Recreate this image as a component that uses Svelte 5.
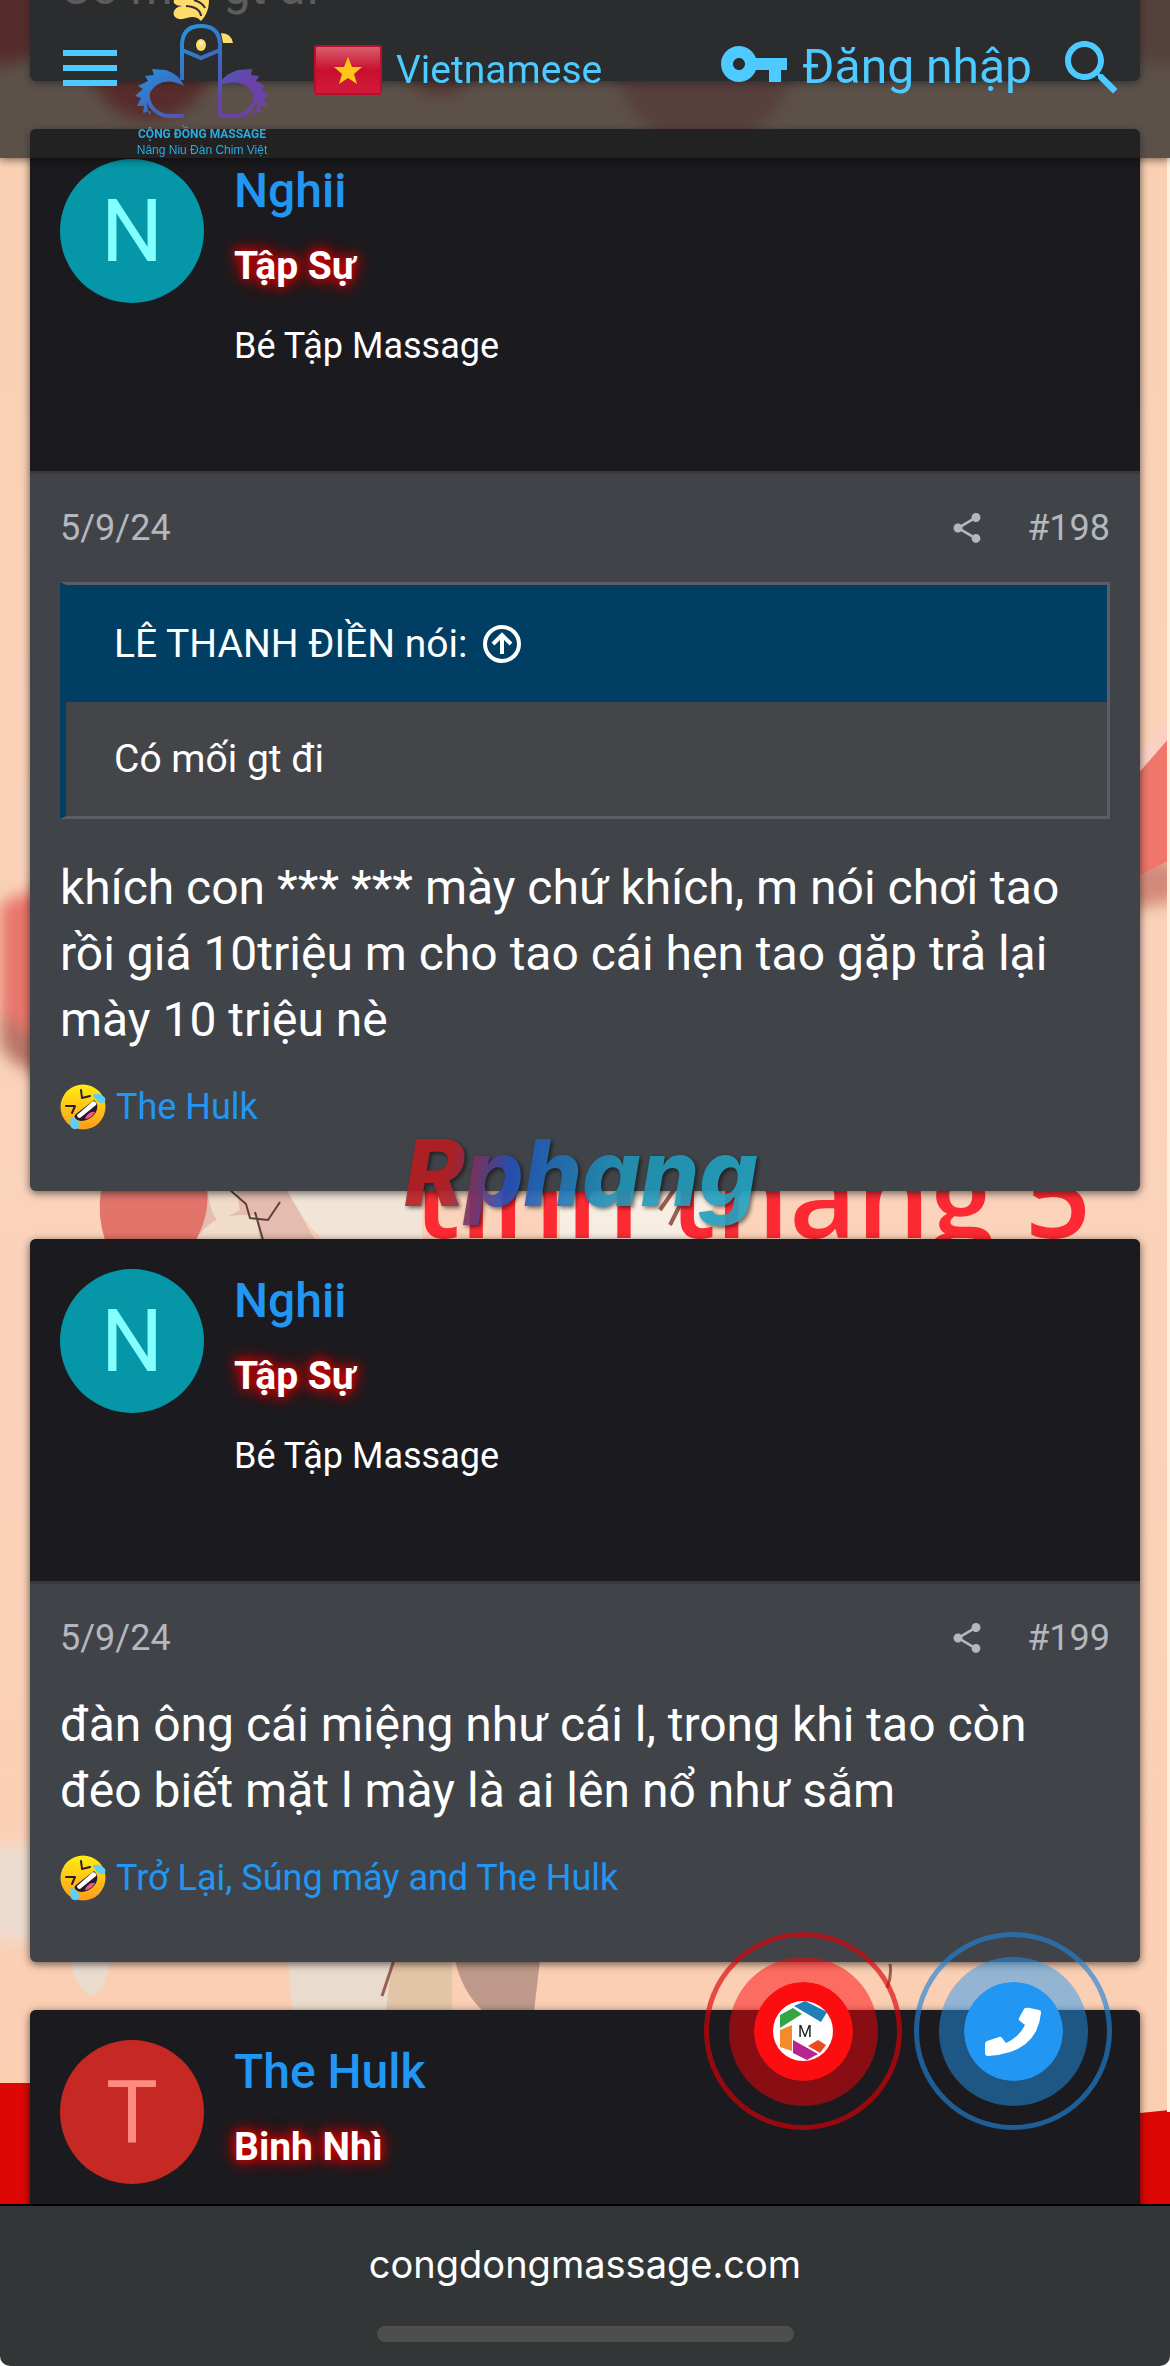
<script>
    const posts = [
        {
            number: 198,
            user: 'Nghii',
            rank: 'Tập Sự',
            title: 'Bé Tập Massage',
            color: 'teal',
            date: '5/9/24',
            quote: {author: 'LÊ THANH ĐIỀN', text: 'Có mối gt đi'},
            text: 'khích con *** *** mày chứ khích, m nói chơi tao rồi giá 10triệu m cho tao cái hẹn tao gặp trả lại mày 10 triệu nè',
            reactions: 'The Hulk'
        },
        {
            number: 199,
            user: 'Nghii',
            rank: 'Tập Sự',
            title: 'Bé Tập Massage',
            color: 'teal',
            date: '5/9/24',
            text: 'đàn ông cái miệng như cái l, trong khi tao còn đéo biết mặt l mày là ai lên nổ như sắm',
            reactions: 'Trở Lại, Súng máy and The Hulk'
        },
        {
            number: 200,
            user: 'The Hulk',
            rank: 'Binh Nhì',
            color: 'red'
        }
    ];
</script>

{#snippet laugh()}
    <svg class="emoji" viewBox="0 0 46 46" aria-hidden="true">
        <defs>
            <linearGradient id="face" x1="0" y1="0" x2="0" y2="1">
                <stop offset="0" stop-color="#ffee12" />
                <stop offset="1" stop-color="#ff9c1c" />
            </linearGradient>
        </defs>
        <circle cx="23" cy="23" r="22.500" fill="url(#face)" />
        <path d="M21 6l1 8 8-2M6 22l9 0-3 7" fill="none" stroke="#2b1c28" stroke-width="2" stroke-linecap="round" stroke-linejoin="round" />
        <path d="M34 16c5 4 4 11-1 16-5 5-14 7-18 2-1-2 0-3 1-4z" fill="#251a2c" />
        <path d="M33 17c3 1 4 2 3 4L20 34c-2 0-3-1-3-3z" fill="#fff" />
        <path d="M25 35c1-4 6-8 10-7-2 4-6 7-10 7z" fill="#f2577e" />
        <path d="M33 11c4-3 10 0 12 3 1 2 0 5-2 5-4 1-7-3-10-8zM11 32c5 3 9 6 8 10-1 4-6 4-8 1-1-3-1-7 0-11z" fill="#5fd0f5" />
    </svg>
{/snippet}

<main>
    <svg class="backdrop" viewBox="0 0 1170 2366" preserveAspectRatio="none" aria-hidden="true">
        <defs>
            <linearGradient id="peach" x1="0" y1="0" x2="0" y2="1">
                <stop offset="0" stop-color="#f9d0b2" />
                <stop offset="0.500" stop-color="#fad3bb" />
                <stop offset="1" stop-color="#fccdb0" />
            </linearGradient>
            <filter id="soft"><feGaussianBlur stdDeviation="8" /></filter>
        </defs>
        <rect width="1170" height="2366" fill="url(#peach)" />
        <g filter="url(#soft)">
            <ellipse cx="0" cy="10" rx="60" ry="55" fill="#e3423c" />
            <circle cx="150" cy="58" r="62" fill="#e8433e" />
            <circle cx="440" cy="55" r="40" fill="#dd6a58" />
            <circle cx="704" cy="55" r="90" fill="#e58a80" />
            <ellipse cx="1160" cy="10" rx="60" ry="55" fill="#dd9080" />
            <path d="M0 905q20-14 60-18v190q-40-6-60-30z" fill="#e8756b" />
            <path d="M0 1010q30 30 60 34v36q-50-10-60-36z" fill="#b87468" />
            <rect x="-10" y="1845" width="60" height="95" fill="#ecdcd0" />
            <path d="M1130 860h50v40l-50 10z" fill="#d3897a" />
        </g>
        <path d="M1130 780l40-50v130l-40 20z" fill="#ef7668" />
        <path d="M1130 765l40-46v18l-40 46z" fill="#fbd0c4" />
        <path d="M101 1190h106q10 24-4 50h-98q-8-24-4-50z" fill="#e3746a" />
        <path d="M207 1190h80l28 50H196q14-26 11-50z" fill="#e4bcb0" />
        <path d="M208 1190h28l4 20-22 12q-10-14-10-32zM196 1240q16-30 60-24l4 24z" fill="#f1dcc8" />
        <path d="M287 1190h135v50H322q-22-24-35-50z" fill="#f1e5d8" />
        <path d="M230 1190l16 14 4 14 18 2 12-18M255 1212l8 28" fill="none" stroke="#5b4038" stroke-width="2" />
        <path d="M560 1190h160l-20 50H560z" fill="#f7ede2" />
        <path d="M660 1210l14-20M670 1225l10-20" stroke="#9a5e50" stroke-width="4" />
        <text class="banner" x="414" y="1238">tình tháng 5</text>
        <path d="M288 1960h160v52H292z" fill="#eadccd" />
        <path d="M70 1960h40q-4 34-20 36-16-12-20-36z" fill="#e9dccf" />
        <path d="M392 1960h60v52h-66z" fill="#e2c4a6" />
        <path d="M455 1960h85l-6 52h-50q-22-20-29-52z" fill="#bf9a8a" />
        <path d="M394 1960l-12 36M890 1964q2 12-3 24" fill="none" stroke="#9a5f54" stroke-width="3" />
        <path d="M0 2083h32v30h1108l30-3v256H0z" fill="#dd0805" />
        <rect x="1167" y="158" width="3" height="1954" fill="#fff0dc" />
    </svg>

    <header>
        <button aria-label="Menu">
            <svg class="icon" viewBox="0 0 24 24"><path d="M3 18h18v-2H3v2zm0-5h18v-2H3v2zm0-7v2h18V6H3z" /></svg>
        </button>
        <a class="logo" href="#home" aria-label="Cộng Đồng Massage">
            <svg viewBox="0 0 136 126" aria-hidden="true">
                <defs>
                    <linearGradient id="bird" gradientUnits="userSpaceOnUse" x1="34" y1="30" x2="90" y2="100">
                        <stop offset="0" stop-color="#1f9de3" />
                        <stop offset="0.600" stop-color="#3f68bf" />
                        <stop offset="1" stop-color="#6a42a8" />
                    </linearGradient>
                </defs>
                <g fill="none" stroke="url(#bird)" stroke-width="4">
                    <path d="M48 80V44q1-18 19-18t19 18v72h14c16 0 24-14 20-24" />
                    <path d="M48 50l19 8 19-8M50 116H36C22 116 12 104 14 92" />
                </g>
                <path d="M50 86q-4-11-18-16l-14-1 2 6-9 1 3 5-10 5 5 3-8 7 6 2-4 8 7 0-1 7 8-2-1 5q-5-12-1-22 12-20 35-8zM86 82q7-9 18-12l14-1-1 6 8 1-3 5 9 5-4 3 8 7-6 2 4 8-7 0 1 7-8-2 1 5q6-12 0-22-11-17-34-9z" fill="url(#bird)" />
                <path d="M40 0c-2 5 5 6 11 6-9-1-14 6-10 11 8 7 17-6 26 4 5-5 8-12 8-21zM87 33q10 0 12 10H89z" fill="#fddc6b" />
                <path d="M52 6q14 1 15 10M60 0q9 3 11 8" fill="none" stroke="#2d2d2d" stroke-width="2" />
                <ellipse cx="67" cy="45" rx="5" ry="6" fill="#fddc6b" />
                <circle cx="67" cy="43" r="2" fill="#fff3cf" />
            </svg>
            <strong>CỘNG ĐỒNG MASSAGE</strong>
            <small>Nâng Niu Đàn Chim Việt</small>
        </a>
        <a class="language" href="#language">
            <svg class="flag" viewBox="0 0 68 50" aria-hidden="true">
                <defs>
                    <linearGradient id="flag" x1="0" y1="0" x2="0" y2="1">
                        <stop offset="0" stop-color="#d9606f" />
                        <stop offset="0.500" stop-color="#c8102e" />
                        <stop offset="1" stop-color="#d41a3a" />
                    </linearGradient>
                </defs>
                <rect x="1" y="1" width="66" height="48" rx="2" fill="url(#flag)" stroke="#b8102a" stroke-width="2" />
                <path d="M34 12l4 10h10l-8 7 3 10-9-6-9 6 3-10-8-7h10z" fill="#ffc61a" />
            </svg>
            Vietnamese
        </a>
        <a class="login" href="#login">
            <svg class="icon" viewBox="0 0 24 24"><path d="M12.65 10C11.83 7.67 9.61 6 7 6c-3.310 0-6 2.690-6 6s2.690 6 6 6c2.610 0 4.830-1.670 5.650-4H17v4h4v-4h2v-4H12.650zM7 14c-1.100 0-2-.9-2-2s.9-2 2-2 2 .9 2 2-.9 2-2 2z" /></svg>
            Đăng nhập
        </a>
        <button aria-label="Tìm kiếm">
            <svg class="icon" viewBox="0 0 24 24"><path d="M15.500 14h-.79l-.28-.27C15.410 12.590 16 11.110 16 9.500 16 5.910 13.090 3 9.500 3S3 5.910 3 9.500 5.910 16 9.500 16c1.610 0 3.090-.59 4.230-1.570l.27.28v.79l5 4.990L20.490 19l-4.990-5zm-6 0C7.010 14 5 11.990 5 9.500S7.010 5 9.500 5 14 7.010 14 9.500 11.990 14 9.500 14z" /></svg>
        </button>
    </header>

    <div class="thread">
        <article>
            <div class="content"><p>Có mối gt đi</p></div>
        </article>
        {#each posts as post}
            <article>
                <div class="user">
                    <a class="avatar {post.color}" href="#{post.user}" aria-label={post.user}>{post.user[0]}</a>
                    <div class="info">
                        <a class="name" href="#{post.user}">{post.user}</a>
                        <strong>{post.rank}</strong>
                        {#if post.title}
                            <span>{post.title}</span>
                        {/if}
                    </div>
                </div>
                {#if post.text}
                    <div class="content">
                        <div class="meta">
                            <a href="#post">{post.date}</a>
                            <a class="share" href="#share" aria-label="Chia sẻ">
                                <svg viewBox="0 0 24 24"><path d="M18 16.080c-.76 0-1.440.3-1.960.77L8.910 12.700c.05-.23.09-.46.09-.7s-.04-.47-.09-.7l7.050-4.110c.54.5 1.250.81 2.040.81 1.660 0 3-1.340 3-3s-1.340-3-3-3-3 1.340-3 3c0 .24.04.47.09.7L8.040 9.810C7.500 9.310 6.790 9 6 9c-1.660 0-3 1.340-3 3s1.340 3 3 3c.79 0 1.500-.31 2.040-.81l7.120 4.160c-.05.21-.08.43-.08.65 0 1.610 1.310 2.920 2.920 2.920s2.920-1.310 2.920-2.920-1.310-2.920-2.920-2.920z" /></svg>
                            </a>
                            <a href="#post-{post.number}">#{post.number}</a>
                        </div>
                        {#if post.quote}
                            <blockquote>
                                <a href="#quote">
                                    {post.quote.author} nói:
                                    <svg viewBox="0 0 38 38" aria-hidden="true"><circle cx="19" cy="19" r="17" /><path d="M19 29V11M10 19l9-9 9 9" /></svg>
                                </a>
                                <div>{post.quote.text}</div>
                            </blockquote>
                        {/if}
                        <p>{post.text}</p>
                        <a class="reactions" href="#reactions">{@render laugh()}{post.reactions}</a>
                    </div>
                {/if}
            </article>
        {/each}
    </div>

    <div class="watermark">Rphang</div>

    <div class="contact">
        <a class="bubble site" href="#site" aria-label="Trang chủ">
            <span>
                <svg viewBox="0 0 60 60" aria-hidden="true">
                    <circle cx="30" cy="30" r="30" fill="#fff" />
                    <path d="M21 5l11-5 22 11-6 10z" fill="#1f7fb8" />
                    <path d="M7 14l13-7 9 6-22 14z" fill="#35a544" />
                    <path d="M7 29l12-5v26l-12-4z" fill="#f58a2c" />
                    <path d="M20 39l25 14-11 6-14-7z" fill="#b5248f" />
                    <path d="M35 45l10-6 8 5-6 8z" fill="#ea4b1f" />
                    <text x="32" y="36" text-anchor="middle">M</text>
                </svg>
            </span>
        </a>
        <a class="bubble phone" href="#phone" aria-label="Gọi điện">
            <span>
                <svg viewBox="0 0 60 60" aria-hidden="true"><path d="M47 7l9 2q2 0 2 3-4 40-53 43-3 0-3-3V43q0-2 2-3l12-4q2-1 3 1l4 5q13-6 19-18l-5-4q-2-1-1-3l5-9q1-2 6-1z" fill="#fff" /></svg>
            </span>
        </a>
    </div>

    <footer>
        <div class="address">
            <span>congdongmassage.com</span>
            <i></i>
        </div>
    </footer>
</main>

<style>
    :global(body) {
        background: #fff;
    }

    main {
        position: relative;
        height: 100vh;
        overflow: hidden;
        color: #fff;
        font-family: Roboto, sans-serif;
        font-size: 36px;
    }

    a {
        color: inherit;
        text-decoration: none;
    }

    button {
        padding: 0;
        border: none;
        background: none;
        color: inherit;
        cursor: pointer;
    }

    svg {
        display: block;
    }

    .backdrop {
        position: absolute;
        width: 100%;
        height: 100%;
    }

    .banner {
        fill: #fd2a33;
        font-family: "Open Sans", sans-serif;
        font-size: 116px;
        font-weight: 600;
    }

    header {
        position: fixed;
        z-index: 2;
        top: 0;
        left: 0;
        right: 0;
        display: flex;
        align-items: flex-start;
        box-sizing: border-box;
        height: 158px;
        padding: 0 42px 0 54px;
        background: rgba(37, 37, 37, 0.74);
        box-shadow: 0 2px 8px rgba(0, 0, 0, 0.5);
        color: #4dcaff;
    }

    header button {
        padding-top: 32px;
    }

    .icon {
        width: 72px;
        height: 72px;
        fill: currentColor;
    }

    .logo {
        display: flex;
        flex-direction: column;
        align-items: center;
        width: 136px;
        margin-left: 8px;
        color: #29abe2;
        white-space: nowrap;
    }

    .logo svg {
        width: 136px;
        height: 126px;
    }

    .logo strong {
        font-size: 12px;
        line-height: 16px;
    }

    .logo small {
        font-family: "Liberation Sans", sans-serif;
        font-size: 12px;
        line-height: 16px;
    }

    .language {
        display: flex;
        align-items: center;
        gap: 14px;
        height: 140px;
        margin-left: 44px;
        font-size: 39px;
    }

    .flag {
        width: 68px;
        height: 50px;
    }

    .login {
        display: flex;
        align-items: center;
        gap: 12px;
        height: 132px;
        margin: 0 24px 0 auto;
        font-size: 48px;
    }

    .login .icon {
        margin-top: -4px;
    }

    .thread {
        display: flex;
        flex-direction: column;
        gap: 48px;
        margin-top: -75px;
        padding: 0 30px;
    }

    article {
        position: relative;
        border-radius: 6px;
        background: #404448;
        box-shadow: 0 2px 8px rgba(0, 0, 0, 0.6);
    }

    .user {
        display: flex;
        gap: 30px;
        box-sizing: border-box;
        height: 345px;
        padding: 30px;
        border-bottom: 3px solid #393a3c;
        border-radius: 6px 6px 0 0;
        background: #1b1b1f;
    }

    .avatar {
        flex: none;
        width: 144px;
        height: 144px;
        border-radius: 50%;
        font-size: 87px;
        line-height: 144px;
        text-align: center;
    }

    .teal {
        background: #0597a7;
        color: #84ffff;
    }

    .red {
        background: #c62923;
        color: #ff8a80;
    }

    .info {
        display: flex;
        flex-direction: column;
    }

    .name {
        color: #2196f3;
        font-size: 48px;
        font-weight: 500;
        line-height: 64px;
    }

    .info strong {
        margin-top: 16px;
        font-size: 39px;
        line-height: 54px;
        text-shadow: 0 0 8px #c00, 0 0 14px #d00, 0 0 20px #a00;
    }

    .info span {
        margin-top: 28px;
        line-height: 50px;
    }

    .content {
        display: flow-root;
        padding: 30px 30px 60px;
    }

    .meta {
        display: flex;
        align-items: center;
        height: 48px;
        margin-bottom: 30px;
        color: #b4b7be;
    }

    .share {
        margin: 0 42px 0 auto;
    }

    .share svg {
        width: 36px;
        height: 36px;
        fill: currentColor;
    }

    blockquote {
        margin: 0 0 36px;
        border: 3px solid #5a5d63;
        border-left: 6px solid #003e63;
        background: #434549;
        font-size: 39px;
    }

    blockquote a,
    blockquote div {
        display: flex;
        align-items: center;
        gap: 16px;
        height: 114px;
        padding: 0 48px;
    }

    blockquote a {
        height: 117px;
        background: #003e63;
    }

    blockquote svg {
        width: 38px;
        height: 38px;
        fill: none;
        stroke: currentColor;
        stroke-width: 4px;
    }

    p {
        margin: 0;
        font-size: 48px;
        line-height: 66px;
    }

    .reactions {
        display: flex;
        align-items: center;
        gap: 10px;
        height: 48px;
        margin-top: 30px;
        color: #2196f3;
    }

    .emoji {
        width: 46px;
        height: 46px;
    }

    .watermark {
        position: absolute;
        top: 50%;
        left: 50%;
        padding: 0 8px 20px 0;
        background: linear-gradient(100deg, #b71c22 14%, #2350b8 30%, #1f78b5 46%, #1f93b5 58%, #22a6c4);
        background-clip: text;
        color: transparent;
        filter: drop-shadow(2px 2px 2px rgba(0, 0, 0, 0.6));
        font-family: Inter, sans-serif;
        font-size: 92px;
        font-style: italic;
        font-weight: 800;
        line-height: 110px;
        opacity: 0.9;
        transform: translate(-50%, -50%);
    }

    .contact {
        position: fixed;
        right: 58px;
        bottom: 236px;
        display: flex;
        gap: 12px;
    }

    .bubble {
        display: grid;
        place-items: center;
        box-sizing: border-box;
        width: 198px;
        height: 198px;
        border: 5px solid;
        border-radius: 50%;
    }

    .bubble span {
        display: grid;
        place-items: center;
        box-sizing: border-box;
        width: 149px;
        height: 149px;
        border: 25px solid;
        border-radius: 50%;
        background-clip: padding-box;
    }

    .site {
        border-color: rgba(220, 0, 8, 0.65);
    }

    .site span {
        border-color: rgba(255, 0, 8, 0.48);
        background-color: #fb0d10;
    }

    .phone {
        border-color: rgba(33, 130, 215, 0.65);
    }

    .phone span {
        border-color: rgba(33, 150, 243, 0.48);
        background-color: #2196f3;
    }

    .bubble svg {
        width: 60px;
        height: 60px;
    }

    .bubble text {
        fill: #222;
        font-size: 16px;
    }

    footer {
        position: fixed;
        z-index: 3;
        right: 0;
        bottom: 0;
        left: 0;
        background: #fff;
    }

    .address {
        display: flex;
        flex-direction: column;
        align-items: center;
        box-sizing: border-box;
        height: 162px;
        padding-top: 34px;
        border-top: 2px solid #000;
        border-radius: 0 0 10px 10px;
        background: #333637;
        font-family: Inter, sans-serif;
        font-size: 38px;
        line-height: 48px;
    }

    .address i {
        width: 417px;
        height: 16px;
        margin-top: 38px;
        border-radius: 8px;
        background: #4e4e4e;
    }
</style>
